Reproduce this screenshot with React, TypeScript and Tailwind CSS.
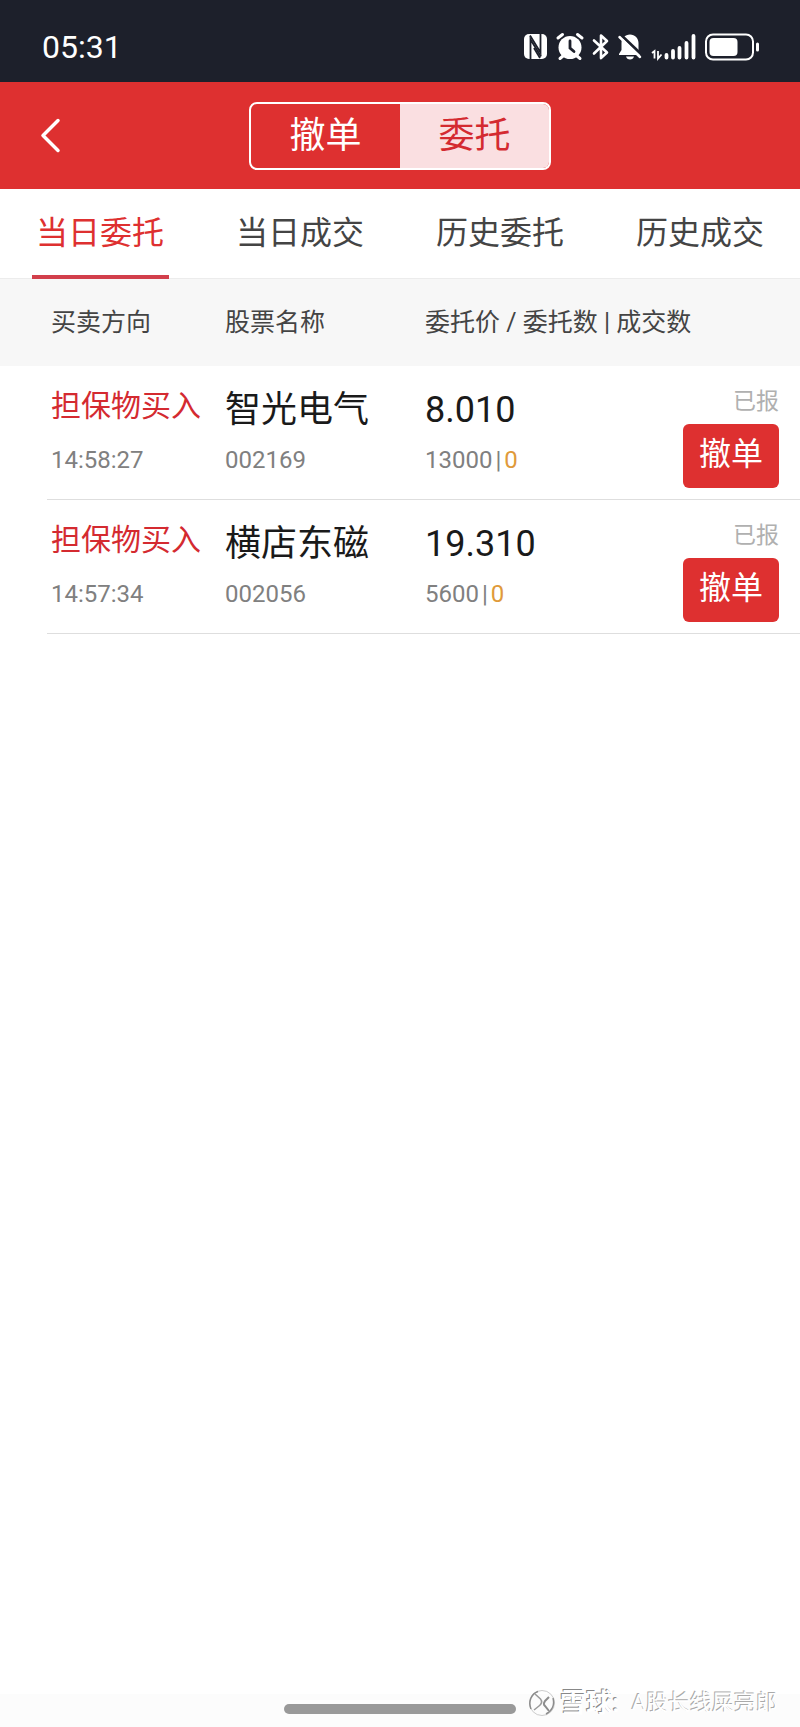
import React, { useState } from 'react';

interface Order {
  direction: string;
  time: string;
  name: string;
  code: string;
  price: string;
  amount: number;
  filled: number;
  status: string;
}

const orders: Order[] = [
  { direction: '担保物买入', time: '14:58:27', name: '智光电气', code: '002169', price: '8.010', amount: 13000, filled: 0, status: '已报' },
  { direction: '担保物买入', time: '14:57:34', name: '横店东磁', code: '002056', price: '19.310', amount: 5600, filled: 0, status: '已报' },
];

const tabs = ['当日委托', '当日成交', '历史委托', '历史成交'];

const StatusIcons = () => (
  <svg width="240" height="32" viewBox="0 0 240 32" fill="none" aria-hidden="true">
    {/* NFC */}
    <rect x="3" y="3" width="23" height="25" rx="5" fill="#fff" />
    <path d="M9.500 28V8.500L20 25.500" stroke="#1d202b" strokeWidth="1.800" />
    <path d="M9 4.500L19.500 21.500V3" stroke="#1d202b" strokeWidth="1.800" />
    <path d="M13 17L19 27" stroke="#1d202b" strokeWidth="1.800" />
    {/* alarm */}
    <circle cx="49" cy="16.500" r="11.500" fill="#fff" />
    <path d="M37 7L41.500 3.500M61 7L56.500 3.500M42 25L39 27.500M56 25L59 27.500" stroke="#fff" strokeWidth="3" strokeLinecap="round" />
    <path d="M49 10V17L53 20.500" stroke="#1d202b" strokeWidth="2.800" strokeLinecap="round" />
    {/* bluetooth */}
    <path d="M73 9.500L86 21.500L80 27V4.500L86 10L73 22.500" stroke="#fff" strokeWidth="2.600" strokeLinejoin="round" strokeLinecap="round" />
    {/* muted bell */}
    <path d="M109 3.500C114 3.500 117.500 7.500 117.500 12V19L120 23V24H98V23L100.500 19V12C100.500 7.500 104 3.500 109 3.500Z" fill="#fff" />
    <path d="M105 25.500H113C112.500 27.500 111 28.500 109 28.500S105.500 27.500 105 25.500Z" fill="#fff" />
    <path d="M100 4L121 24" stroke="#1d202b" strokeWidth="3" />
    <path d="M98.500 6L119 26" stroke="#fff" strokeWidth="2.500" strokeLinecap="round" />
    {/* signal */}
    <path d="M131 22L133.500 20V27.500M137 20V27.500L140.500 23.500" stroke="#fff" strokeWidth="1.800" />
    <path d="M145.500 24V26.500M152 20V26.500M158.500 17V26.500M165.500 12V26.500M172.500 5V26.500" stroke="#fff" strokeWidth="3.800" strokeLinecap="round" />
    {/* battery */}
    <rect x="185" y="3.500" width="47" height="25" rx="7" stroke="#fff" strokeWidth="2" />
    <rect x="188.500" y="7" width="28" height="18" rx="4" fill="#fff" />
    <path d="M236.500 13V19" stroke="#fff" strokeWidth="3" strokeLinecap="round" />
  </svg>
);

const OrderRow: React.FC<{ order: Order }> = ({ order }) => (
  <tr className="align-top">
    <td></td>
    <td className="border-b border-[#dedede] pt-[18px] pl-1 whitespace-nowrap">
      <p className="text-[30px] leading-11 text-[#d42a30]">{order.direction}</p>
      <p className="mt-4 text-2xl leading-8 text-[#808080]">{order.time}</p>
    </td>
    <td className="border-b border-[#dedede] pt-[18px] whitespace-nowrap">
      <p className="text-4xl leading-13 text-[#1a1a1a]">{order.name}</p>
      <p className="mt-2 text-2xl leading-8 text-[#808080]">{order.code}</p>
    </td>
    <td className="border-b border-[#dedede] pt-[18px] whitespace-nowrap">
      <p className="text-4xl leading-13 text-[#1a1a1a]">{order.price}</p>
      <p className="mt-2 text-2xl leading-8 text-[#808080]">
        {order.amount}
        <span className="mx-[3px]">|</span>
        <span className="text-[#e09a3a]">{order.filled}</span>
      </p>
    </td>
    <td className="border-b border-[#dedede] pt-4 pr-[21px] pb-[11px] text-right">
      <p className="text-[23px] leading-10 text-[#b0b0b0]">{order.status}</p>
      <button type="button" className="mt-0.5 ml-auto block h-16 w-24 rounded-md bg-[#de3030] pb-1 text-[32px] leading-10 text-white">
        撤单
      </button>
    </td>
  </tr>
);

export default function App() {
  const [activeTab, setActiveTab] = useState(tabs[0]);

  return (
    <div className="relative flex min-h-screen flex-col bg-white font-[Roboto,'Noto_Sans_CJK_SC',sans-serif]">
      {/* Status bar */}
      <div className="flex h-[82px] items-center justify-between bg-[#1d202b] pt-3 pr-[39px] pl-[42px]">
        <span className="text-[32px] leading-10 text-white">05:31</span>
        <StatusIcons />
      </div>

      {/* Header */}
      <header className="grid h-[107px] grid-cols-[1fr_auto_1fr] items-center bg-[#de3030] px-8">
        <button type="button" aria-label="返回" className="flex h-12 w-9 items-center justify-center">
          <svg width="24" height="36" viewBox="0 0 24 36" fill="none" stroke="#fff" strokeWidth="3.500" strokeLinecap="round" strokeLinejoin="round">
            <path d="M20 2.500L5 17.500L20 32.500" />
          </svg>
        </button>
        <div className="flex h-[68px] w-[302px] overflow-hidden rounded-lg border-2 border-white text-4xl">
          <button type="button" className="flex-1 text-white">撤单</button>
          <button type="button" className="flex-1 bg-[#fadfe1] text-[#d42a30]">委托</button>
        </div>
      </header>

      {/* Tabs */}
      <nav className="grid h-[90px] grid-cols-4 border-b border-[#ececec]">
        {tabs.map((tab) => (
          <button
            key={tab}
            type="button"
            onClick={() => setActiveTab(tab)}
            className={`-mb-px mx-auto w-[137px] border-b-4 pt-0.5 text-[32px] whitespace-nowrap ${
              tab === activeTab ? 'border-[#d23f4b] text-[#de3030]' : 'border-transparent text-[#444]'
            }`}
          >
            {tab}
          </button>
        ))}
      </nav>

      {/* Orders */}
      <main className="flex-1">
        <table className="w-full table-fixed border-separate border-spacing-0">
          <colgroup>
            <col className="w-[47px]" />
            <col className="w-[178px]" />
            <col className="w-[200px]" />
            <col />
            <col className="w-[117px]" />
          </colgroup>
          <thead>
            <tr className="h-[87px] bg-[#f7f7f7] text-left text-[25px] whitespace-nowrap text-[#444]">
              <td></td>
              <th scope="col" className="pl-1 font-normal">买卖方向</th>
              <th scope="col" className="font-normal">股票名称</th>
              <th scope="col" colSpan={2} className="font-normal">委托价 / 委托数 | 成交数</th>
            </tr>
          </thead>
          <tbody>
            {orders.map((order) => (
              <OrderRow key={order.code} order={order} />
            ))}
          </tbody>
        </table>
      </main>

      {/* Gesture bar */}
      <footer className="flex h-[33px] items-start justify-center bg-[#fcfcfc] pt-[10px]">
        <div className="h-[10px] w-[232px] rounded-full bg-[#999]"></div>
      </footer>

      {/* Watermark */}
      <div className="absolute right-[22px] bottom-2 flex items-center text-[22px] leading-8 whitespace-nowrap text-white [text-shadow:-1px_-1px_0_#aaa]">
        <svg width="28" height="28" viewBox="0 0 28 28" fill="none" className="mr-1" aria-hidden="true">
          <circle cx="14" cy="14" r="12.500" stroke="#ccc" />
          <path d="M3 20C0 13 3 5 10 2.500M25 9C27 16 24 22 18 25" stroke="#8c8c8c" strokeWidth="1.500" />
          <path d="M7 5L12.500 10C14.500 12.500 13.500 15 11 17L6 21" stroke="#999" strokeWidth="1.500" />
          <path d="M21 8L17 12C15.500 14 15.500 15.500 17 17L21 22" stroke="#8c8c8c" strokeWidth="2" />
        </svg>
        <span className="mr-3 text-[26px] font-bold [text-shadow:-1px_-1px_0_#888]">雪球:</span>
        <span>A股长线屎亮郎</span>
      </div>
    </div>
  );
}
